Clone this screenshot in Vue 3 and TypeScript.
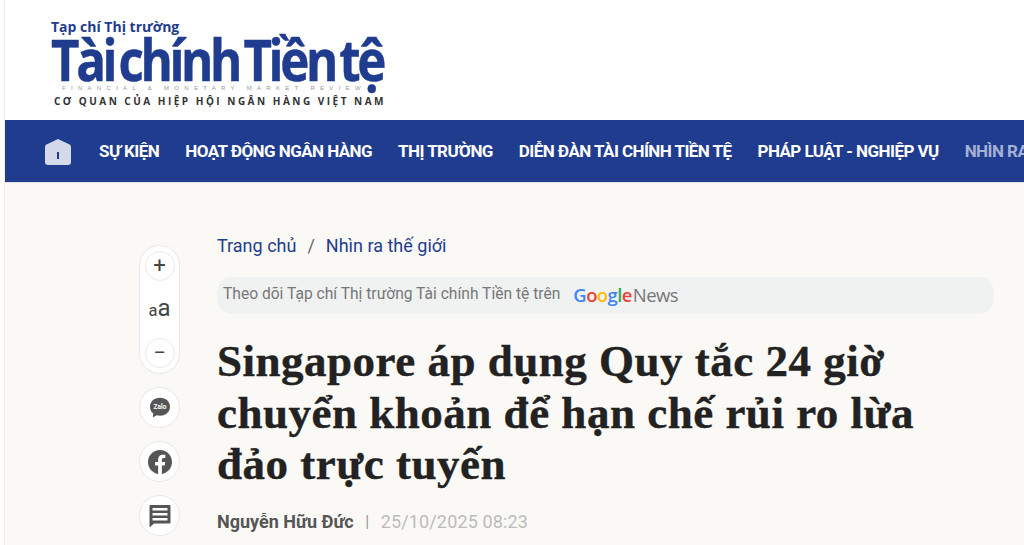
<script setup lang="ts">
const navItems = [
  { label: 'SỰ KIỆN' },
  { label: 'HOẠT ĐỘNG NGÂN HÀNG' },
  { label: 'THỊ TRƯỜNG' },
  { label: 'DIỄN ĐÀN TÀI CHÍNH TIỀN TỆ' },
  { label: 'PHÁP LUẬT - NGHIỆP VỤ' },
  { label: 'NHÌN RA THẾ GIỚI', active: true },
]
</script>

<template>
  <div class="page">
    <header class="masthead">
      <div class="logo">
        <div class="logo-top">Tạp chí Thị trường</div>
        <div class="logo-main">Tài chính Tiền tệ</div>
        <div class="logo-en">FINANCIAL &amp; MONETARY MARKET REVIEW</div>
        <div class="logo-sub">CƠ QUAN CỦA HIỆP HỘI NGÂN HÀNG VIỆT NAM</div>
      </div>
    </header>
    <nav class="nav">
      <svg class="home" width="26" height="26" viewBox="0 0 26 26">
        <path d="M13 0 L24.500 5.500 Q26 6.300 26 8 V23 Q26 26 23 26 H3 Q0 26 0 23 V8 Q0 6.300 1.500 5.500 Z" fill="#d5daea" />
        <rect x="12" y="13" width="2" height="7" fill="#1f3c8f" />
      </svg>
      <a v-for="n in navItems" :key="n.label" class="nav-link" :class="{ active: n.active }">{{ n.label }}</a>
    </nav>
    <main class="content">
      <aside class="tools">
        <div class="pill">
          <button class="tool small"><span class="sym">+</span></button>
          <div class="aa"><span class="a1">a</span><span class="a2">a</span></div>
          <button class="tool small"><span class="sym">−</span></button>
        </div>
        <button class="tool big">
          <svg width="24" height="24" viewBox="0 0 24 24">
            <path d="M12 1.800C18 1.800 22 5.800 22 10.700S18 19.700 12 19.700C10.800 19.700 9.700 19.500 8.700 19.200L4.800 21.600L5.300 17.500C3.200 16 2 13.500 2 10.700C2 5.800 6 1.800 12 1.800Z" fill="#555" />
            <text x="12" y="13.200" text-anchor="middle" class="zalo">Zalo</text>
          </svg>
        </button>
        <button class="tool big">
          <svg width="24" height="24" viewBox="0 0 24 24">
            <path fill="#555" d="M24 12.070C24 5.400 18.630 0 12 0S0 5.400 0 12.070c0 6.030 4.390 11.020 10.130 11.930v-8.440H7.080v-3.490h3.050V9.410c0-3.020 1.790-4.690 4.530-4.690 1.310 0 2.680.24 2.680.24v2.970h-1.510c-1.490 0-1.960.93-1.960 1.880v2.260h3.330l-.53 3.490h-2.800V24C19.610 23.090 24 18.100 24 12.070z" />
          </svg>
        </button>
        <button class="tool big">
          <svg width="24" height="24" viewBox="0 0 24 24">
            <path fill="#555" fill-rule="evenodd" d="M3 1H21C22 1 22.500 1.500 22.500 2.500V18C22.500 19 22 19.500 21 19.500H6L1.500 23.500V2.500C1.500 1.500 2 1 3 1ZM4.500 4V6.500H19.500V4ZM4.500 9V11.500H19.500V9ZM4.500 14V16.500H19.500V14Z" />
          </svg>
        </button>
      </aside>
      <article class="article">
        <div class="crumbs">
          <a>Trang chủ</a><span class="sep">/</span><a>Nhìn ra thế giới</a>
        </div>
        <div class="follow">
          <span class="follow-text">Theo dõi Tạp chí Thị trường Tài chính Tiền tệ trên</span>
          <span class="gnews"><span class="g"><i class="b">G</i><i class="r">o</i><i class="y">o</i><i class="b">g</i><i class="gr">l</i><i class="r">e</i></span><span class="news">News</span></span>
        </div>
        <h1 class="title">Singapore áp dụng Quy tắc 24 giờ chuyển khoản để hạn chế rủi ro lừa đảo trực tuyến</h1>
        <div class="meta">
          <span class="author">Nguyễn Hữu Đức</span><span class="bar">|</span><span class="date">25/10/2025 08:23</span>
        </div>
      </article>
    </main>
  </div>
</template>

<style>
html, body { margin: 0; height: 100%; overflow: hidden; background: #fff; }
</style>

<style scoped>
.page {
  height: 545px;
  margin-left: 4px;
  border-left: 1px solid #eee;
  overflow: hidden;
  display: flex;
  flex-direction: column;
  background: #fbf9f5;
  font-family: Roboto, sans-serif;
}
.masthead {
  flex: none;
  height: 120px;
  background: #fff;
  padding: 18px 0 0 46px;
  box-sizing: border-box;
  overflow: hidden;
}
.logo { width: 340px; color: #1f3c8f; font-family: "Open Sans", sans-serif; }
.logo-top { font-size: 14px; line-height: 18px; font-weight: 700; }
.logo-main {
  font-size: 58px;
  line-height: 46px;
  font-weight: 700;
  letter-spacing: -4px;
  word-spacing: -6px;
  white-space: nowrap;
  -webkit-text-stroke: 0.5px #1f3c8f;
  transform: scaleX(0.85);
  transform-origin: left center;
}
.logo-en {
  font-size: 6px;
  line-height: 8px;
  letter-spacing: 5.3px;
  color: #999;
  white-space: nowrap;
  margin: 2px 0 0 11px;
  font-family: "Liberation Sans", sans-serif;
}
.logo-sub {
  font-size: 10px;
  line-height: 12px;
  font-weight: 700;
  letter-spacing: 2.5px;
  color: #333;
  white-space: nowrap;
  margin: 3px 0 0 3px;
}
.nav {
  flex: none;
  height: 62px;
  background: #1f3c8f;
  display: flex;
  align-items: center;
  gap: 26px;
  padding-left: 40px;
  white-space: nowrap;
  overflow: hidden;
}
.home { flex: none; margin: 2px 2px 0 0; }
.nav-link {
  color: #fff;
  font-size: 17px;
  font-weight: 700;
  letter-spacing: -0.56px;
  flex: none;
}
.nav-link.active { color: #a4b1d6; }
.content {
  flex: 1;
  display: flex;
  padding: 52px 30px 0 134px;
  gap: 37px;
  border-top: 1px solid #e3e3e3;
  min-height: 0;
}
.tools {
  flex: none;
  width: 41px;
  display: flex;
  flex-direction: column;
  gap: 13px;
  padding-top: 10px;
}
.pill {
  width: 41px;
  height: 129px;
  box-sizing: border-box;
  border: 1.500px solid #e8e8e8;
  border-radius: 21px;
  background: #fff;
  display: flex;
  flex-direction: column;
  align-items: center;
  justify-content: space-between;
  padding: 5px 0;
}
.tool {
  padding: 0;
  margin: 0;
  border: 1.500px solid #e8e8e8;
  border-radius: 50%;
  background: #fff;
  display: flex;
  align-items: center;
  justify-content: center;
  box-sizing: border-box;
}
.tool.small { width: 30px; height: 30px; }
.tool.big { width: 41px; height: 41px; flex: none; }
.sym { font-family: Roboto, sans-serif; font-size: 22px; line-height: 22px; color: #444; }
.aa { color: #444; font-family: Roboto, sans-serif; line-height: 24px; }
.a1 { font-size: 16.500px; }
.a2 { font-size: 24px; }
.zalo { font-family: Roboto, sans-serif; font-size: 6.500px; font-weight: 700; fill: #fff; }
.article { flex: 1; min-width: 0; }
.crumbs {
  font-size: 18px;
  line-height: 22px;
  color: #1f3c8f;
}
.sep { margin: 0 11px; color: #666; }
.follow {
  margin-top: 20px;
  height: 37px;
  border-radius: 15px;
  background: #f0f2f2;
  display: flex;
  align-items: center;
  padding-left: 6px;
  gap: 13px;
  font-size: 15.600px;
  color: #777;
}
.follow-text { margin-bottom: 3px; }
.gnews { display: flex; align-items: center; margin-bottom: 2px; font-family: "Open Sans", sans-serif; font-size: 18.500px; letter-spacing: -0.6px; }
.g { font-weight: 600; }
.g i { font-style: normal; }
.g .b { color: #4285f4; }
.g .r { color: #ea4335; }
.g .y { color: #fbbc05; }
.g .gr { color: #34a853; }
.news { color: #777; margin-left: 1px; }
.title {
  margin: 22px 0 0;
  font-family: "Liberation Serif", serif;
  font-size: 45px;
  line-height: 51.700px;
  font-weight: 700;
  letter-spacing: 0.5px;
  -webkit-text-stroke: 0.4px #222;
  color: #222;
  width: 740px;
}
.meta {
  margin-top: 20px;
  font-size: 18px;
  line-height: 22px;
  display: flex;
  align-items: center;
}
.author { font-weight: 700; color: #555; }
.bar { margin: 0 11.500px; color: #999; font-size: 16px; }
.date { color: #bbb; letter-spacing: 0.15px; }
</style>
